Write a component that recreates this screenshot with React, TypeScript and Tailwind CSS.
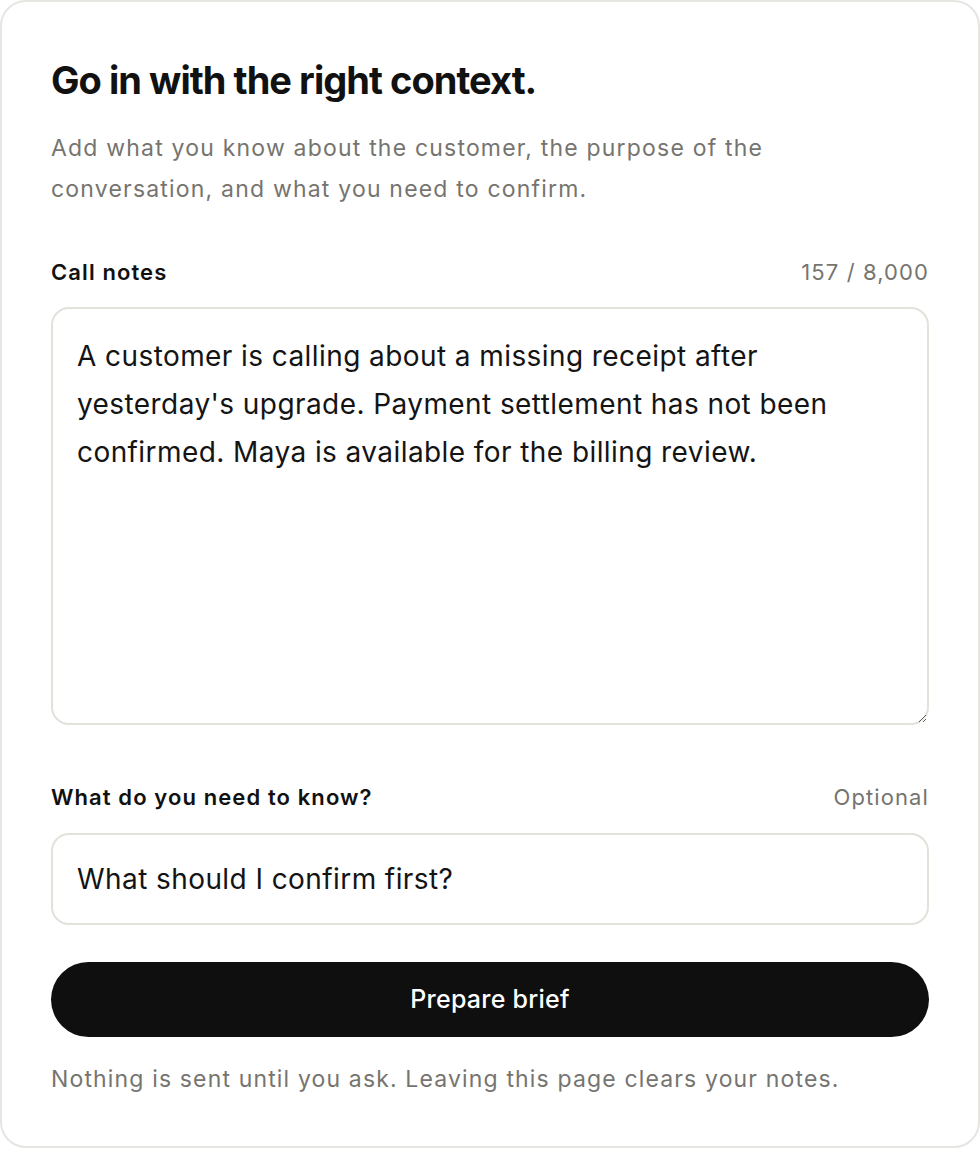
import React from "react";

export default function App() {
  return (
    <div className="min-h-[1150px] w-[980px] bg-white" style={{ fontFamily: "Inter, 'Noto Sans', sans-serif" }}>
      <div className="flex h-[1148px] w-[980px] flex-col rounded-[26px] border-2 border-[#e6e5e1] bg-white px-[49px] pt-[54px]">
        <h1 className="text-[38px] font-bold leading-[48px] tracking-[-0.025em] text-[#111111]">
          Go in with the right context.
        </h1>
        <p className="mt-[24px] w-[760px] text-[23px] leading-[41px] tracking-[0.052em] text-[#76746f]">
          Add what you know about the customer, the purpose of the conversation, and what you need to confirm.
        </p>
        <div className="mt-[47px] flex items-center justify-between">
          <label className="text-[22px] font-semibold leading-[30px] tracking-[0.05em] text-[#111111]">Call notes</label>
          <span className="text-[22px] leading-[30px] tracking-[0.05em] text-[#76746f]">157 / 8,000</span>
        </div>
        <textarea
          className="mt-[20px] h-[418px] w-full resize-y rounded-[18px] border-2 border-[#e2e1da] bg-white px-[24px] pt-[23px] pb-[20px] text-[28px] leading-[48px] tracking-[0.015em] text-[#141414] outline-none"
          style={{ fontFamily: "Inter, 'Noto Sans', sans-serif" }}
          defaultValue="A customer is calling about a missing receipt after yesterday's upgrade. Payment settlement has not been confirmed. Maya is available for the billing review."
        />
        <div className="mt-[57px] flex items-center justify-between">
          <label className="text-[22px] font-semibold leading-[30px] tracking-[0.05em] text-[#111111]">What do you need to know?</label>
          <span className="text-[22px] leading-[30px] tracking-[0.05em] text-[#76746f]">Optional</span>
        </div>
        <input
          className="mt-[21px] h-[92px] w-full rounded-[18px] border-2 border-[#e2e1da] bg-white px-[24px] text-[28px] tracking-[0.015em] text-[#141414] outline-none"
          style={{ fontFamily: "Inter, 'Noto Sans', sans-serif" }}
          defaultValue="What should I confirm first?"
        />
        <button className="mt-[37px] h-[75px] w-full rounded-full bg-[#0f0f0f] text-[25px] font-medium tracking-[0.01em] text-white">
          Prepare brief
        </button>
        <p className="mt-[26px] text-[23px] leading-[32px] tracking-[0.05em] text-[#76746f]">
          Nothing is sent until you ask. Leaving this page clears your notes.
        </p>
      </div>
    </div>
  );
}
